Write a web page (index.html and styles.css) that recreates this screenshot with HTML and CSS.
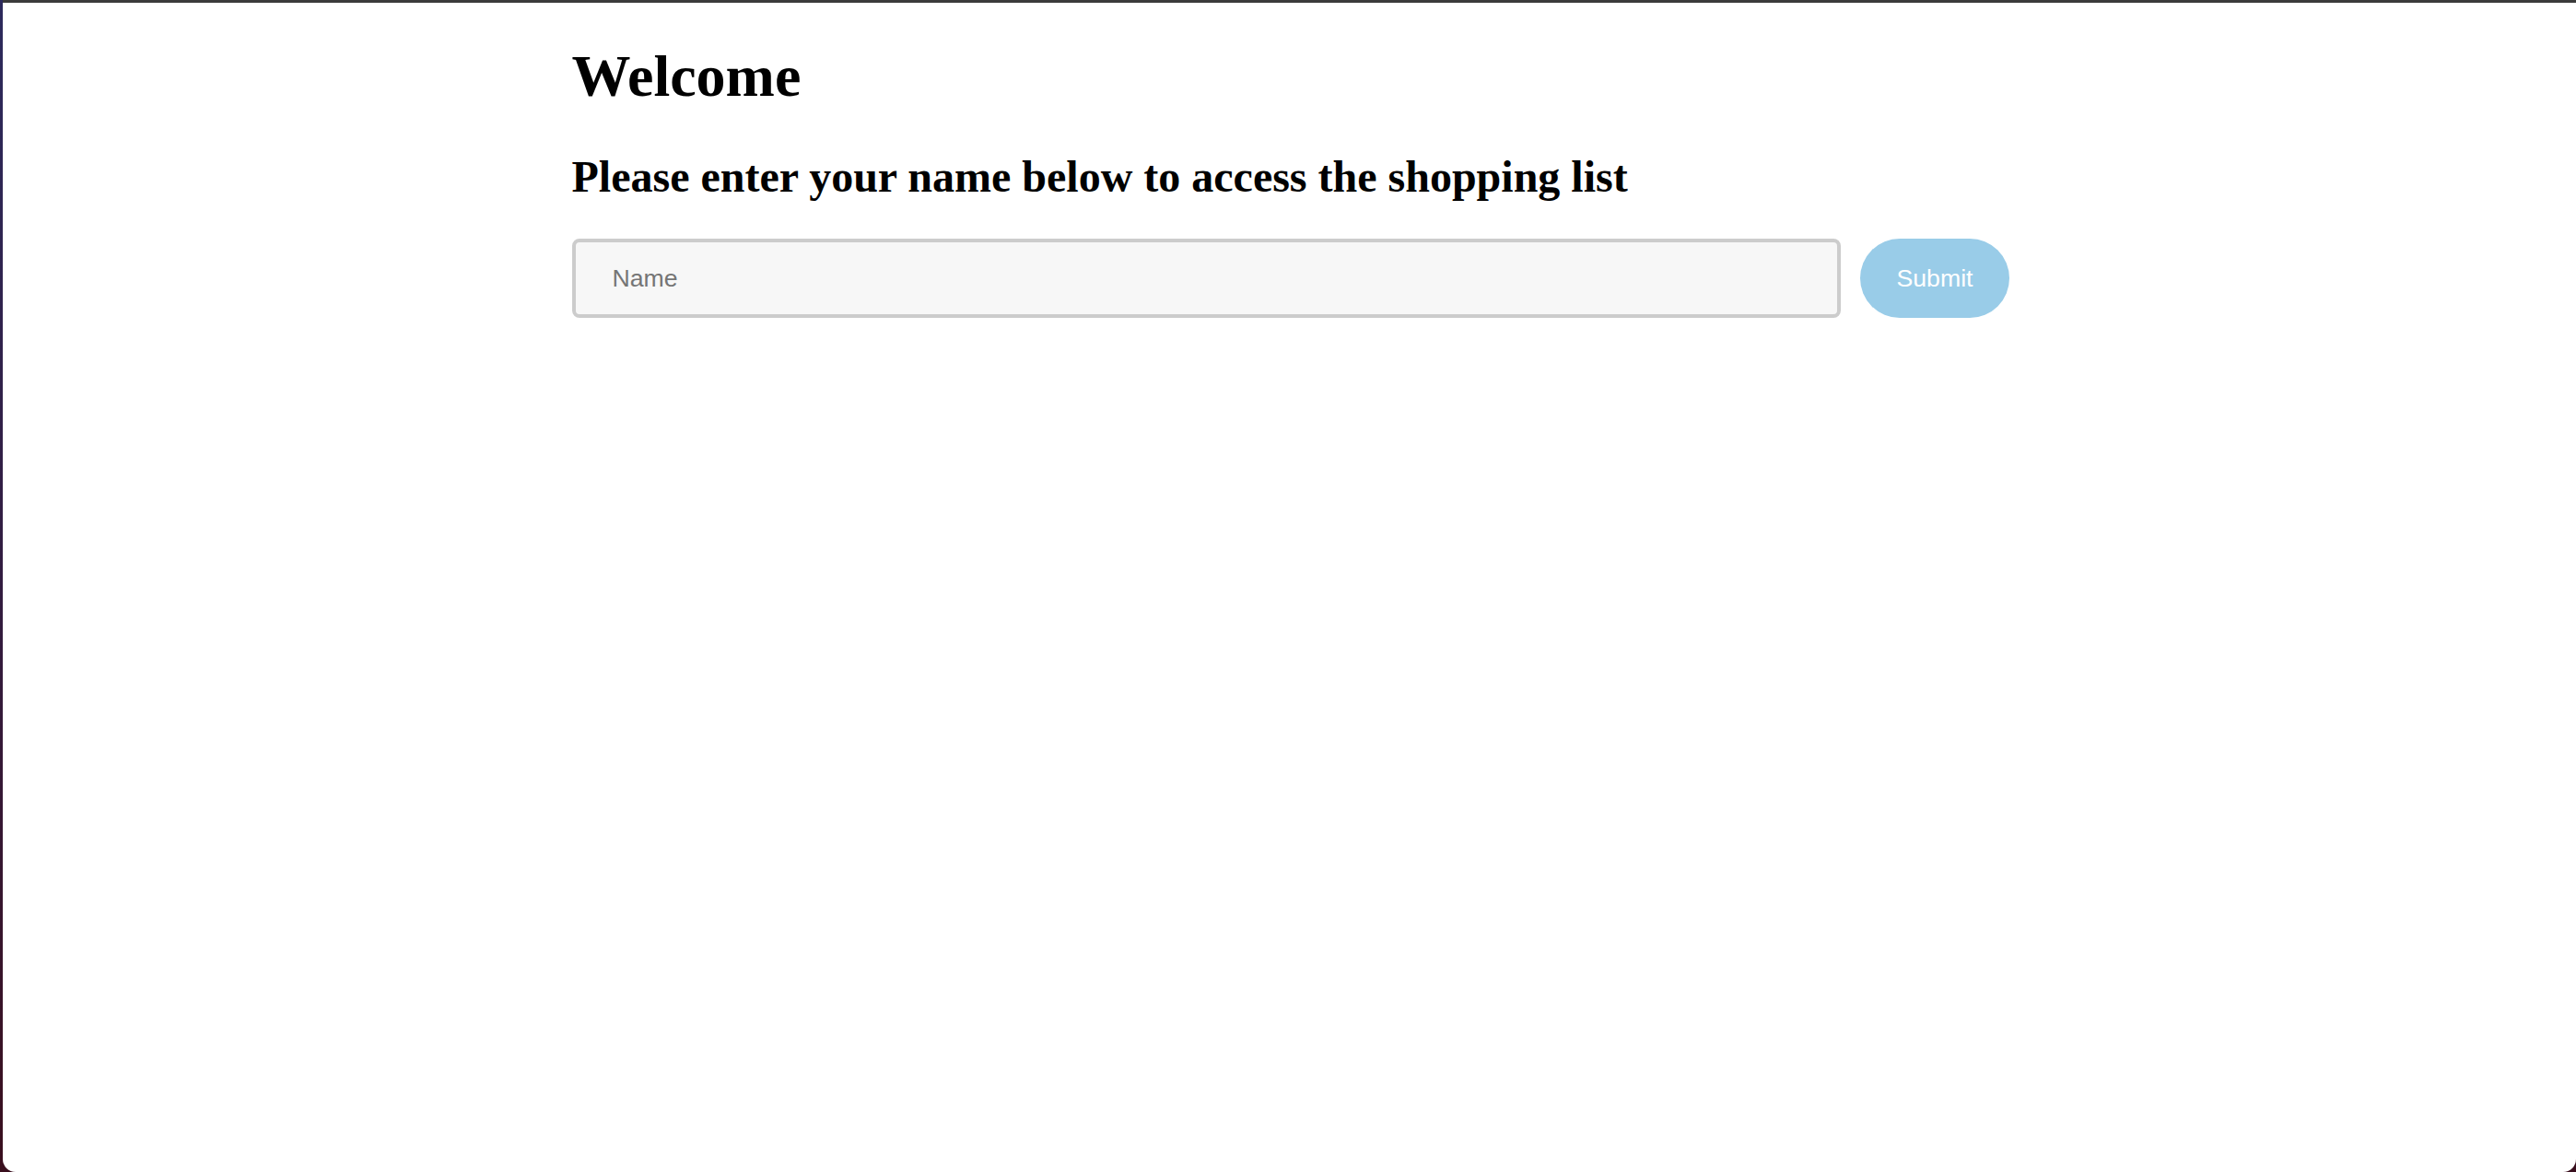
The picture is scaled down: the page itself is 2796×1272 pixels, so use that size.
FILE: index.html
```html
<!DOCTYPE html>
<html lang="en">
<head>
<meta charset="utf-8">
<title>Welcome</title>
<link rel="stylesheet" href="styles.css">
</head>
<body>
<div class="desktop">
  <div class="window">
    <div class="titlebar"></div>
    <main class="container">
      <h1 class="title">Welcome</h1>
      <h2 class="subtitle">Please enter your name below to access the shopping list</h2>
      <form class="name-form">
        <input class="name-input" type="text" placeholder="Name">
        <button class="submit-btn" type="button">Submit</button>
      </form>
    </main>
  </div>
</div>
</body>
</html>
```
FILE: styles.css
```css
html, body {
  margin: 0;
  padding: 0;
  height: 100%;
}
body {
  font-family: "Liberation Serif", "Times New Roman", serif;
  background: #2a1530;
}
.desktop {
  height: 100vh;
  display: flex;
  background: linear-gradient(180deg, #2c2a5c 0%, #321c40 50%, #3a0f1e 100%);
  padding-left: 3px;
  box-sizing: border-box;
}
.window {
  flex: 1;
  display: flex;
  flex-direction: column;
  background: #ffffff;
  border-radius: 0 0 14px 14px;
  overflow: hidden;
}
.titlebar {
  height: 3px;
  background: #3b3b3b;
  flex: none;
}
.container {
  width: 1558px;
  margin: 0 auto;
  box-sizing: border-box;
  display: flex;
  flex-direction: column;
  align-items: flex-start;
}
.title {
  font-size: 64px;
  font-weight: bold;
  margin: 43px 0 44px 0;
  color: #000;
}
.subtitle {
  font-size: 48px;
  font-weight: bold;
  margin: 0 0 40px 0;
  color: #000;
}
.name-form {
  display: flex;
  align-items: center;
  gap: 21px;
  margin: 0;
}
.name-input {
  width: 1377px;
  height: 86px;
  box-sizing: border-box;
  border: 4px solid #cccccc;
  border-radius: 8px;
  background: #f7f7f7;
  padding: 0 40px;
  font-family: "Liberation Sans", Arial, sans-serif;
  font-size: 26.67px;
  color: #333;
  outline: none;
}
.name-input::placeholder {
  color: #757575;
}
.submit-btn {
  height: 86px;
  padding: 0 40px;
  border: none;
  border-radius: 43px;
  background: #99cce8;
  color: #ffffff;
  font-family: "Liberation Sans", Arial, sans-serif;
  font-size: 26.67px;
  cursor: pointer;
}
```
